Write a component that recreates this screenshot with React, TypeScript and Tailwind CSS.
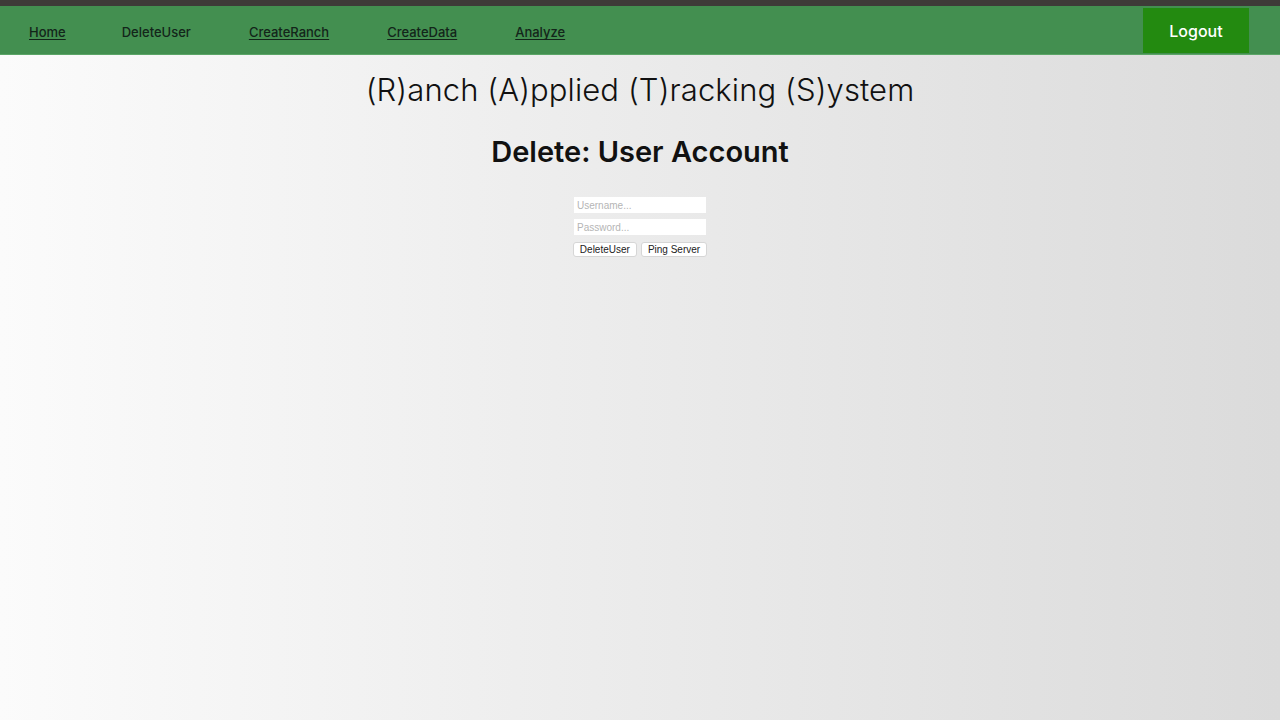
import { useState } from "react"

const links = ["Home", "DeleteUser", "CreateRanch", "CreateData", "Analyze"]
const gaps = ["mr-[56px]", "mr-[58px]", "mr-[58px]", "mr-[58px]", ""]

export default function App() {
  const [username, setUsername] = useState("")
  const [password, setPassword] = useState("")

  return (
    <div className="min-h-[720px] flex flex-col bg-gradient-to-r from-[#fbfbfb] to-[#dbdbdb]" style={{ fontFamily: "Inter, 'Noto Sans', sans-serif" }}>
      <div className="h-[6px] bg-[#3e3b38]" />
      <nav className="h-[49px] bg-[#438f50] border-b border-[#5ba567] flex items-center pl-[29px] pr-[31px]">
        <div className="flex items-center text-[13px] font-medium text-[#13251a] pt-[6px]">
          {links.map((l, i) => (
            <a
              key={l}
              href="#"
              className={(i === 1 ? "no-underline " : "underline ") + "underline-offset-2 " + gaps[i]}
            >
              {l}
            </a>
          ))}
        </div>
        <button className="ml-auto h-[45px] w-[106px] bg-[#238a10] text-white text-[16px] font-medium pt-[2px]">Logout</button>
      </nav>
      <main className="flex flex-col items-center">
        <h1 className="mt-[14px] text-[31px] font-light text-[#111] leading-[42px] tracking-[0.1px]">
          (R)anch (A)pplied (T)racking (S)ystem
        </h1>
        <h2 className="mt-[20px] text-[29px] font-semibold text-[#111] leading-[42px] tracking-[0px]">Delete: User Account</h2>
        <div className="mt-[24px] flex flex-col items-center gap-[6px] text-[10px]" style={{ fontFamily: "'Liberation Sans', sans-serif" }}>
          <input
            value={username}
            onChange={e => setUsername(e.target.value)}
            placeholder="Username..."
            className="w-[132px] h-[16px] bg-white px-[3px] placeholder:text-[#b5b5b5] outline-none"
          />
          <input
            type="password"
            value={password}
            onChange={e => setPassword(e.target.value)}
            placeholder="Password..."
            className="w-[132px] h-[16px] bg-white px-[3px] placeholder:text-[#b5b5b5] outline-none"
          />
          <div className="flex gap-[4px] mt-[1px]">
            <button className="h-[15px] px-[6px] bg-white rounded-[3px] border border-[#d6d6d6] text-[#222] leading-none">DeleteUser</button>
            <button className="h-[15px] px-[6px] bg-white rounded-[3px] border border-[#d6d6d6] text-[#222] leading-none">Ping Server</button>
          </div>
        </div>
      </main>
    </div>
  )
}
